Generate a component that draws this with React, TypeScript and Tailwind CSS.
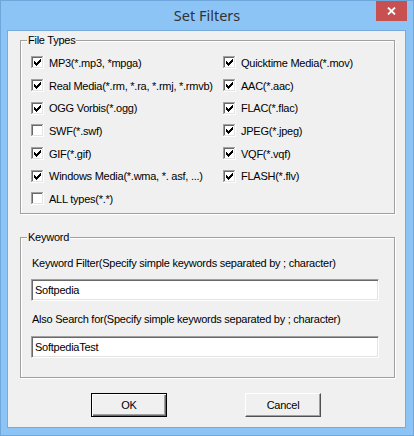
import React from 'react';

const font = { fontFamily: '"Liberation Sans", Arial, sans-serif' };

const leftTypes: [string, boolean][] = [
  ['MP3(*.mp3, *mpga)', true],
  ['Real Media(*.rm, *.ra, *.rmj, *.rmvb)', true],
  ['OGG Vorbis(*.ogg)', true],
  ['SWF(*.swf)', false],
  ['GIF(*.gif)', true],
  ['Windows Media(*.wma, *. asf, ...)', true],
  ['ALL types(*.*)', false],
];

const rightTypes: [string, boolean][] = [
  ['Quicktime Media(*.mov)', true],
  ['AAC(*.aac)', true],
  ['FLAC(*.flac)', true],
  ['JPEG(*.jpeg)', true],
  ['VQF(*.vqf)', true],
  ['FLASH(*.flv)', true],
];

// classic 13x13 sunken checkbox, check drawn pixel by pixel
const checkCols = [2, 3, 4, 3, 2, 1, 0];

function CheckBox({ checked }: { checked: boolean }) {
  return (
    <svg width="13" height="13" viewBox="0 0 13 13" shapeRendering="crispEdges" className="shrink-0">
      <rect x="0" y="0" width="13" height="13" fill="#ffffff" />
      <rect x="0" y="0" width="12" height="1" fill="#a0a0a0" />
      <rect x="0" y="0" width="1" height="12" fill="#a0a0a0" />
      <rect x="1" y="1" width="10" height="1" fill="#696969" />
      <rect x="1" y="1" width="1" height="10" fill="#696969" />
      <rect x="1" y="11" width="11" height="1" fill="#e3e3e3" />
      <rect x="11" y="1" width="1" height="11" fill="#e3e3e3" />
      {checked &&
        checkCols.map((s, i) => (
          <rect key={i} x={3 + i} y={3 + s} width="1" height="3" fill="#000000" />
        ))}
    </svg>
  );
}

function Check({ label, checked }: { label: string; checked: boolean }) {
  return (
    <div className="flex items-center gap-[5px] whitespace-nowrap">
      <CheckBox checked={checked} />
      <span>{label}</span>
    </div>
  );
}

function GroupBox({ title, className, children }: { title: string; className: string; children: React.ReactNode }) {
  return (
    <div
      className={`relative ml-[12px] w-[375px] border border-[#a0a0a0] shadow-[1px_1px_0_#ffffff,inset_1px_1px_0_#ffffff] ${className}`}
    >
      <span className="absolute -top-[8px] left-[6px] bg-[#f0f0f0] px-[1px]">{title}</span>
      {children}
    </div>
  );
}

function TextBox({ value }: { value: string }) {
  return (
    <div className="w-[348px] h-[22px] flex items-center pl-[3px] bg-white border border-t-[#a0a0a0] border-l-[#a0a0a0] border-b-white border-r-white shadow-[inset_1px_1px_0_#696969,inset_-1px_-1px_0_#e3e3e3]">
      {value}
    </div>
  );
}

export default function App() {
  const rows = leftTypes.map((l, i) => [l, rightTypes[i]] as const);

  return (
    <div className="w-[414px] h-[436px] bg-[#8cc4f6] border border-[#6fa6dc] flex flex-col text-black text-[11px] leading-[14px] tracking-[-0.25px]" style={font}>
      {/* Title bar */}
      <div className="relative h-[29px] flex items-center justify-center">
        <span
          className="text-[14.5px] tracking-normal text-[#333333] pb-[1px]"
          style={{ fontFamily: '"Noto Sans", "Open Sans", sans-serif' }}
        >
          Set Filters
        </span>
        <div className="absolute right-[6px] top-0 w-[31px] h-[20px] bg-[#c75050] flex items-center justify-center">
          <svg width="9" height="8" viewBox="0 0 9 8">
            <path d="M1 0.5 L8 7.5 M8 0.5 L1 7.5" stroke="#ffffff" strokeWidth="1.8" />
          </svg>
        </div>
      </div>

      {/* Client area */}
      <div className="ml-[6px] w-[399px] h-[398px] bg-[#f0f0f0] border border-[#78aadc] flex flex-col">
        <GroupBox title="File Types" className="mt-[9px] h-[174px]">
          <div className="grid grid-cols-[192px_1fr] auto-rows-[22.67px] items-center pt-[10.67px] pl-[10px]">
            {rows.map(([l, r], i) => (
              <React.Fragment key={i}>
                <Check label={l[0]} checked={l[1]} />
                {r ? <Check label={r[0]} checked={r[1]} /> : <div />}
              </React.Fragment>
            ))}
          </div>
        </GroupBox>

        <GroupBox title="Keyword" className="mt-[23px] h-[141px]">
          <div className="flex flex-col pt-[18px] pl-[10px]">
            <span className="pl-[1px]">Keyword Filter(Specify simple keywords separated by ; character)</span>
            <div className="mt-[9px]">
              <TextBox value="Softpedia" />
            </div>
            <span className="mt-[11px] pl-[1px]">Also Search for(Specify simple keywords separated by ; character)</span>
            <div className="mt-[10px]">
              <TextBox value="SoftpediaTest" />
            </div>
          </div>
        </GroupBox>

        <div className="mt-[15px] flex pl-[83px] gap-[78px]">
          <button className="w-[76px] h-[24px] bg-[#f0f0f0] border border-black shadow-[inset_1px_1px_0_#ffffff,inset_-1px_-1px_0_#696969,inset_-2px_-2px_0_#a0a0a0]">
            OK
          </button>
          <button className="w-[76px] h-[24px] bg-[#f0f0f0] border border-t-white border-l-white border-b-[#505050] border-r-[#505050] shadow-[inset_-1px_-1px_0_#a0a0a0]">
            Cancel
          </button>
        </div>
      </div>
    </div>
  );
}
